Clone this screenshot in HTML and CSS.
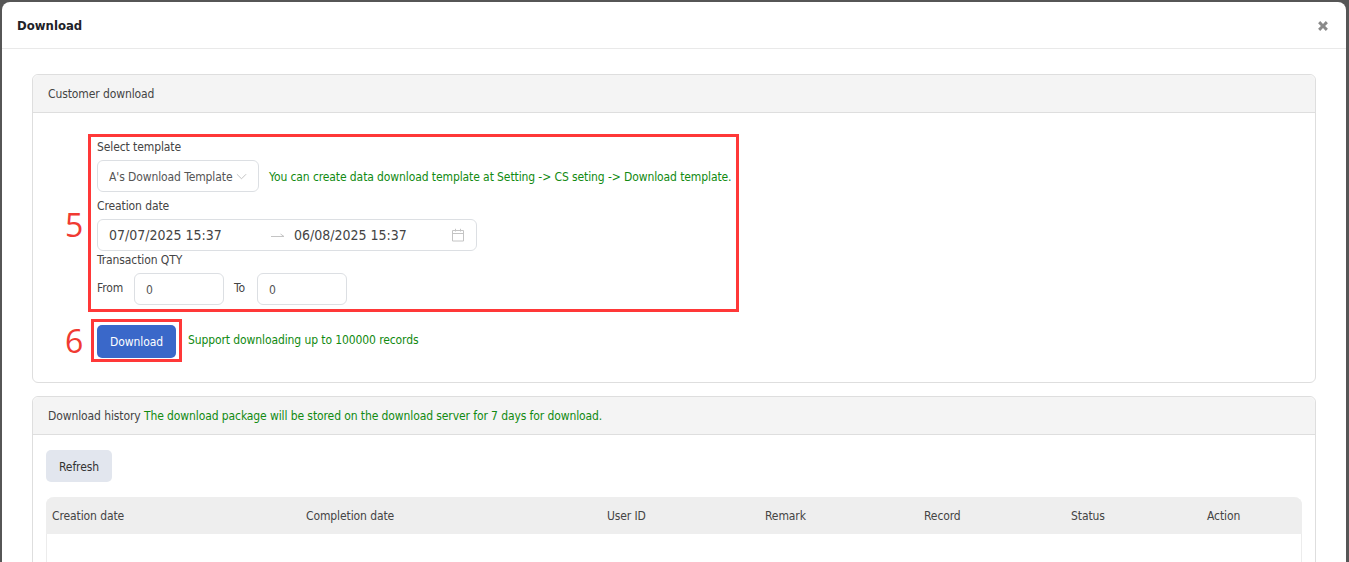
FILE: index.html
```html
<!DOCTYPE html>
<html lang="en">
<head>
<meta charset="utf-8">
<title>Download</title>
<link rel="stylesheet" href="styles.css">
</head>
<body>
<div class="modal">
  <header class="modal-head">
    <h1 class="modal-title">Download</h1>
    <svg class="close" viewBox="0 0 12 12" width="14" height="14" aria-hidden="true"><path d="M1.8 3.6 3.6 1.8 6 4.2 8.4 1.8 10.2 3.6 7.8 6 10.2 8.4 8.4 10.2 6 7.8 3.6 10.2 1.8 8.4 4.2 6Z"/></svg>
  </header>
  <div class="modal-body">
    <section class="panel panel-form">
      <div class="panel-head">Customer download</div>
      <div class="panel-body form-body">
        <div class="annot-wrap">
          <div class="red-box box-five"></div>
          <span class="step step-five">5</span>
          <div class="label">Select template</div>
          <div class="row row-select">
            <div class="select">
              <span>A's Download Template</span>
              <svg class="chev" viewBox="0 0 12 12" width="11" height="11" aria-hidden="true"><path d="M1 3.5 6 8.5 11 3.5"/></svg>
            </div>
            <span class="green select-hint">You can create data download template at Setting -&gt; CS seting -&gt; Download template.</span>
          </div>
          <div class="label label-date">Creation date</div>
          <div class="date-range">
            <span class="date-val">07/07/2025 15:37</span>
            <svg class="arrow" viewBox="0 0 14 8" width="14" height="8" aria-hidden="true"><path d="M0 5.5H13L9.5 3"/></svg>
            <span class="date-val">06/08/2025 15:37</span>
            <svg class="cal" viewBox="0 0 14 14" width="14" height="14" aria-hidden="true"><path d="M1.5 2.5H12.5V13H1.5ZM1.5 5.5H12.5M4.5 .8V3.5M9.5 .8V3.5"/></svg>
          </div>
          <div class="label label-qty">Transaction QTY</div>
          <div class="row row-qty">
            <span class="qty-label">From</span>
            <div class="input">0</div>
            <span class="qty-label qty-to">To</span>
            <div class="input">0</div>
          </div>
          <div class="row row-action">
            <div class="red-box box-six"></div>
            <span class="step step-six">6</span>
            <button class="btn-primary" type="button">Download</button>
            <span class="green support">Support downloading up to 100000 records</span>
          </div>
        </div>
      </div>
    </section>
    <section class="panel panel-history">
      <div class="panel-head">Download history <span class="green">The download package will be stored on the download server for 7 days for download.</span></div>
      <div class="panel-body history-body">
        <button class="btn-light" type="button">Refresh</button>
        <div class="table">
          <div class="thead">
            <span>Creation date</span>
            <span>Completion date</span>
            <span>User ID</span>
            <span>Remark</span>
            <span>Record</span>
            <span>Status</span>
            <span>Action</span>
          </div>
          <div class="tbody"></div>
        </div>
      </div>
    </section>
  </div>
</div>
</body>
</html>
```
FILE: styles.css
```css
* { box-sizing: border-box; }
html, body { height: 100%; }
body {
  margin: 0;
  padding: 2px 3px 0 2px;
  background: #565656;
  overflow: hidden;
  font-family: "DejaVu Sans Condensed", "DejaVu Sans", sans-serif;
  font-stretch: condensed;
  font-size: 12px;
  line-height: 16px;
  letter-spacing: -0.1px;
  color: #333;
}
.modal {
  background: #fff;
  border-radius: 8px 8px 0 0;
  height: 100%;
  overflow: hidden;
}
.modal-head {
  height: 47px;
  border-bottom: 1px solid #e9e9e9;
  padding: 0 16px 0 15px;
  display: flex;
  align-items: center;
  justify-content: space-between;
}
.modal-title {
  margin: 2px 0 0;
  font-size: 13px;
  font-weight: 700;
  letter-spacing: 0;
  color: #1f2329;
}
.close { fill: #8a8a8a; margin-top: 1px; }
.modal-body { padding: 25px 30px 0 30px; }
.panel {
  border: 1px solid #dedede;
  border-radius: 6px;
  background: #fff;
}
.panel-form { height: 309px; }
.panel-history { margin-top: 13px; }
.panel-head {
  height: 38px;
  background: #f4f4f4;
  border-bottom: 1px solid #dedede;
  border-radius: 6px 6px 0 0;
  padding: 0 15px;
  display: flex;
  align-items: center;
  white-space: pre;
  color: #444;
}
.green { color: #118a11; }
.form-body { padding: 26px 0 0 64px; }
.annot-wrap { position: relative; }
.red-box {
  position: absolute;
  border: 3px solid #ff3838;
  pointer-events: none;
}
.box-five { left: -9px; top: -5px; width: 651px; height: 178px; }
.box-six { left: -6px; top: -6px; width: 91px; height: 43px; }
.step {
  position: absolute;
  font-family: "Open Sans", sans-serif;
  font-stretch: normal;
  font-size: 32px;
  line-height: 40px;
  letter-spacing: 0;
  color: #f03a32;
}
.step-five { left: -32px; top: 66px; }
.step-six { left: -32px; top: -4px; }
.label { height: 16px; color: #444; }
.row { display: flex; align-items: center; }
.row-select { margin-top: 5px; gap: 10px; }
.select {
  width: 162px;
  height: 32px;
  border: 1px solid #dcdfe3;
  border-radius: 6px;
  padding: 1px 11px 0 11px;
  display: flex;
  align-items: center;
  justify-content: space-between;
  color: #555;
  white-space: nowrap;
}
.select-hint { margin-top: 1px; }
.chev { fill: none; stroke: #bcbcbc; stroke-width: 1; }
.label-date { margin-top: 6px; }
.date-range {
  margin-top: 5px;
  width: 380px;
  height: 32px;
  border: 1px solid #dcdfe3;
  border-radius: 6px;
  padding: 0 11px;
  display: flex;
  align-items: center;
  font-size: 14px;
  letter-spacing: 0;
  color: #444;
}
.date-val { width: 162px; }
.date-val + .arrow + .date-val { width: 157px; }
.arrow { fill: none; stroke: #c4c4c4; stroke-width: 1; margin-right: 9px; }
.cal { fill: none; stroke: #c4c4c4; stroke-width: 1; }
.label-qty { margin-top: 1px; }
.row-qty { margin-top: 5px; }
.qty-label { width: 37px; margin-top: -2px; color: #444; }
.qty-to { width: 33px; padding-left: 10px; }
.input {
  width: 90px;
  height: 32px;
  border: 1px solid #dcdfe3;
  border-radius: 6px;
  padding: 1px 11px 0;
  display: flex;
  align-items: center;
  color: #555;
}
.row-action { position: relative; margin-top: 20px; gap: 12px; }
.support { margin-top: -4px; }
.btn-primary {
  width: 79px;
  height: 33px;
  border: 0;
  border-radius: 5px;
  background: #3a68c9;
  color: #fff;
  font: inherit;
  letter-spacing: inherit;
  padding: 0;
}
.history-body { padding: 15px 13px 0; }
.btn-light {
  display: block;
  width: 66px;
  height: 32px;
  border: 0;
  border-radius: 5px;
  background: #e2e6ee;
  color: #333;
  font: inherit;
  letter-spacing: inherit;
  padding: 1px 0 0;
}
.table {
  margin-top: 15px;
  border: 1px solid #ececec;
  border-top: 0;
  border-radius: 8px 8px 0 0;
}
.thead {
  height: 37px;
  margin: 0 -1px;
  background: #eeeeee;
  border-radius: 8px 8px 0 0;
  padding: 1px 0 0 6px;
  display: grid;
  grid-template-columns: 254px 301px 158px 159px 147px 136px 1fr;
  align-items: center;
  color: #444;
}
.tbody { height: 100px; }
```
